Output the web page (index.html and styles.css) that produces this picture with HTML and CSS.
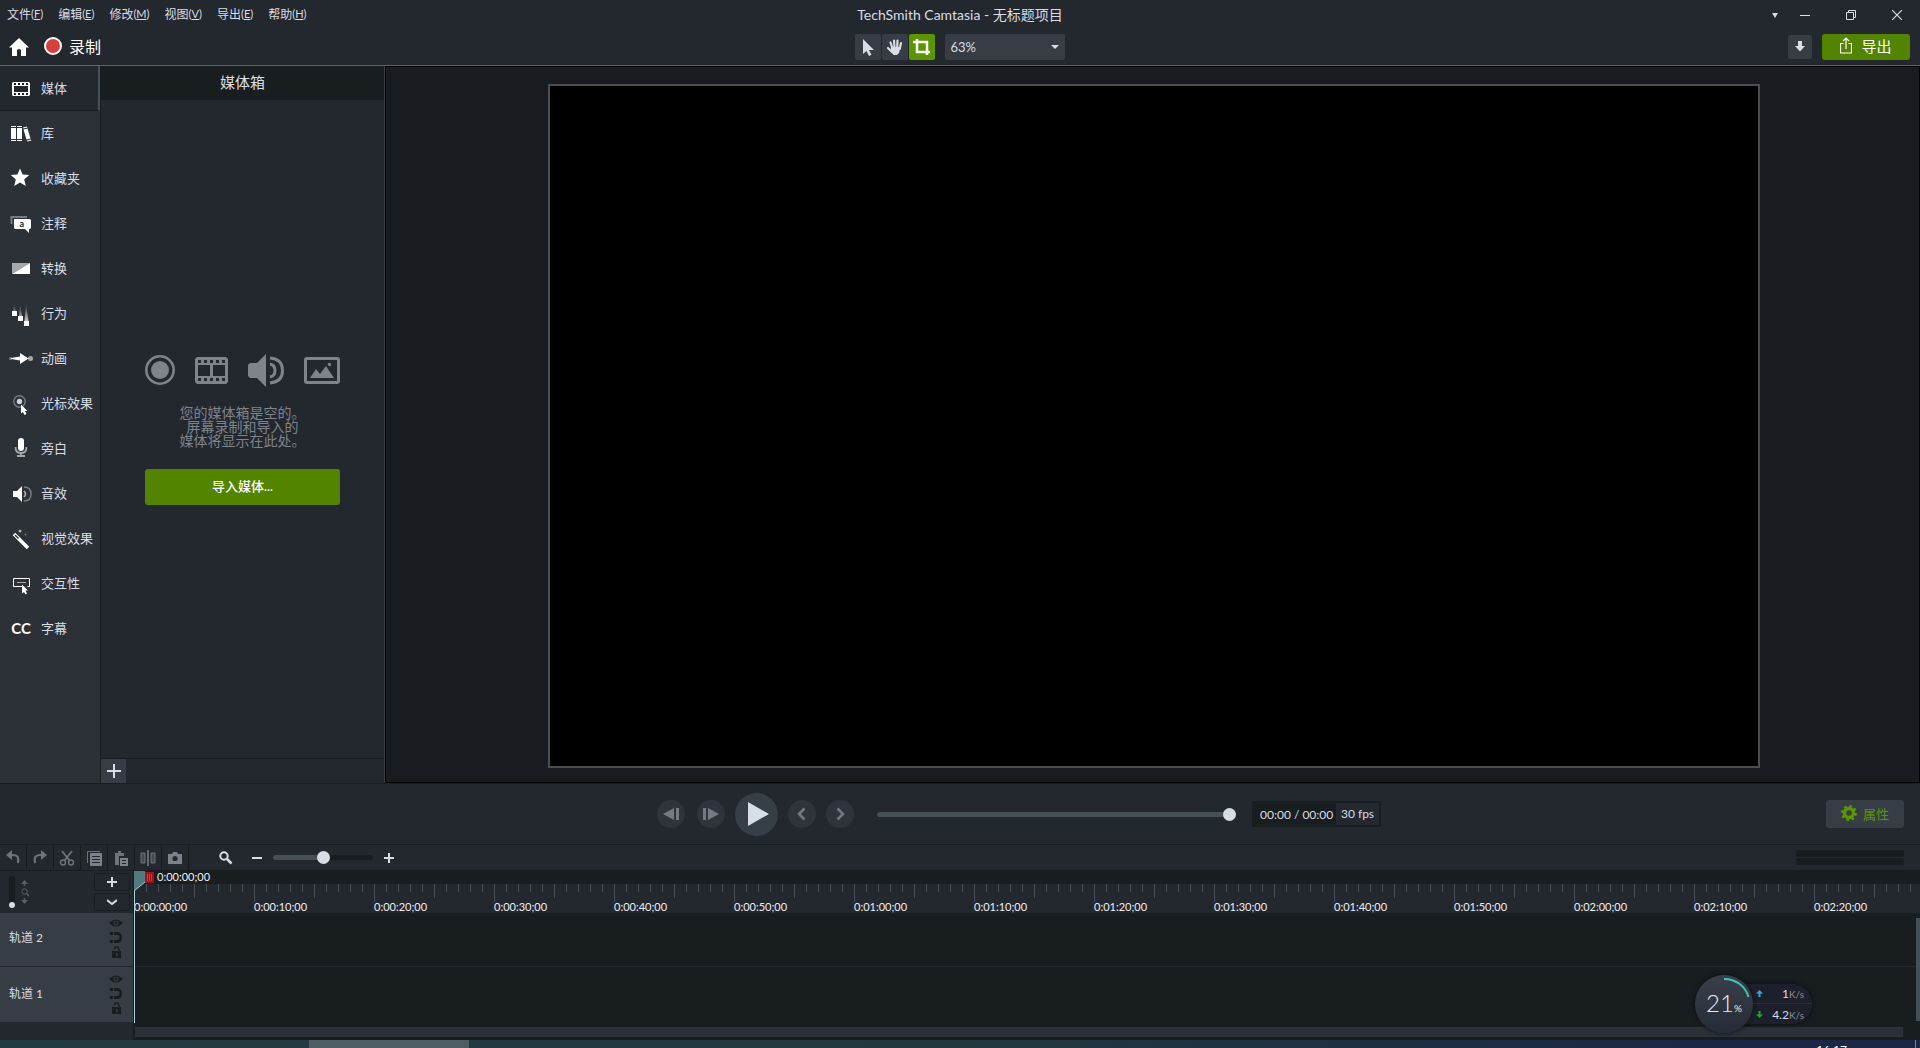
FILE: index.html
```
<!DOCTYPE html>
<html lang="zh-CN">
<head>
    <meta charset="UTF-8">
    <meta name="viewport" content="width=device-width, initial-scale=1.0">
    <title>TechSmith Camtasia - 无标题项目</title>
    <link rel="stylesheet" href="styles.css">
</head>
<body>
    <header class="header">
        <div class="titlebar">
            <nav class="menu">
                <button>文件<small>(<u>F</u>)</small></button>
                <button>编辑<small>(<u>E</u>)</small></button>
                <button>修改<small>(<u>M</u>)</small></button>
                <button>视图<small>(<u>V</u>)</small></button>
                <button>导出<small>(<u>E</u>)</small></button>
                <button>帮助<small>(<u>H</u>)</small></button>
            </nav>
            <h1 class="title">TechSmith Camtasia - 无标题项目</h1>
            <div class="window-controls">
                <button aria-label="更多"><svg width="6" height="6"><path d="M0 1h6L3 6z" fill="#d9dde6"/></svg></button>
                <button class="win" aria-label="最小化"><svg width="10" height="10"><path d="M0 5.500h10" stroke="#d9dde6"/></svg></button>
                <button class="win" aria-label="还原"><svg width="10" height="10"><path d="M.5 2.500h7v7h-7zM2.500 2.500v-2h7v7h-2" fill="none" stroke="#d9dde6"/></svg></button>
                <button class="win" aria-label="关闭"><svg width="10" height="10"><path d="M0 0l10 10M10 0L0 10" stroke="#d9dde6" stroke-width="1.200"/></svg></button>
            </div>
        </div>
        <div class="toolbar">
            <div class="toolbar-left">
                <button aria-label="主页"><svg width="20" height="18" viewBox="0 0 20 18"><path d="M10 0L0 9.500h3V18h5v-5.500q0-1.500 2-1.500t2 1.500V18h5V9.500h3z" fill="#fff"/></svg></button>
                <button class="record"><i class="record-dot"></i>录制</button>
            </div>
            <div class="tools">
                <button class="tool" aria-label="选择"><svg width="26" height="26"><path d="M8 5v15l3.500-3 2.500 5 2.500-1.300-2.500-4.700h5z" fill="#d9dde6"/></svg></button>
                <button class="tool" aria-label="平移"><svg width="26" height="26" fill="none" stroke="#d9dde6" stroke-linecap="round"><path d="M8.500 8.500l2 6M12 6.500l.5 7M15.500 6.500l-.3 7M19 9l-1.300 6M6 14l4 4" stroke-width="2.200"/><path d="M9 13h9.500l-1.500 6-2 2h-3.500l-3-4z" fill="#d9dde6" stroke="none"/></svg></button>
                <button class="tool tool-active" aria-label="裁剪"><svg width="26" height="26"><path d="M4 8h14v13M8 5v13h13" fill="none" stroke="#fff" stroke-width="2.500"/></svg></button>
                <div class="zoom-box">
                    <select class="zoom-select" aria-label="缩放"><option>63%</option><option>100%</option></select>
                </div>
            </div>
            <div class="toolbar-right">
                <button class="download" aria-label="下载"><svg width="10" height="11"><path d="M3 0h4v5h3l-5 5.500L0 5h3z" fill="#d9dde6"/></svg></button>
                <button class="export"><svg width="12" height="17" viewBox="0 0 12 17" fill="none" stroke="#fff" stroke-width="1.200"><path d="M3.500 6.500h-3v9.500h11V6.500h-3M6 12V1M3 4l3-3 3 3"/></svg>导出</button>
            </div>
        </div>
    </header>

    <main class="workspace">
        <nav class="sidebar">
            <button class="side-item side-active"><svg class="side-icon" viewBox="0 0 26 26"><path fill-rule="evenodd" d="M5 7h16l1 1v12l-1 1H5l-1-1V8zM6 11v6h14v-6zM6 8v2h2V8zm4 0v2h2V8zm4 0v2h2V8zm4 0v2h2V8zM6 18v2h2v-2zm4 0v2h2v-2zm4 0v2h2v-2zm4 0v2h2v-2z" fill="#fff"/></svg>媒体</button>
            <button class="side-item"><svg class="side-icon" viewBox="0 0 26 26" fill="#fff"><path d="M3 6h5v1H3zM3 8h5v11H3zM3 20h5v1H3zM9 6h5v1H9zM9 8h5v11H9zM9 20h5v1H9zM15 7.500l4-1 .3 1-4 1zM15.500 9.500l4-1 3 10-4 1zM19 20.500l4-1 .3 1-4 1z"/></svg>库</button>
            <button class="side-item"><svg class="side-icon" viewBox="0 0 26 26"><path d="M12 3.500l2.600 6 6.600.6-5 4.300 1.600 6.600-5.800-3.500L6.200 21l1.600-6.600-5-4.300 6.600-.6z" fill="#fff"/></svg>收藏夹</button>
            <button class="side-item"><svg class="side-icon" viewBox="0 0 26 26"><path d="M3.500 14V7h15.500" fill="none" stroke="#777c81" stroke-width="2"/><path d="M6 9h16l1 1v8l-1 1h-1v4l-4-4H7l-1-1z" fill="#fff"/><text x="11.500" y="17" class="icon-letter">a</text></svg>注释</button>
            <button class="side-item"><svg class="side-icon" viewBox="0 0 26 26"><path d="M4 19V8h18z" fill="#a5a8ac"/><path d="M4 19L22 8v11z" fill="#fff"/></svg>转换</button>
            <button class="side-item"><svg class="side-icon" viewBox="0 0 26 26"><defs><linearGradient id="trail" x1="0" y1="0" x2="0" y2="1"><stop offset="0" stop-color="#fff" stop-opacity="0"/><stop offset="1" stop-color="#fff" stop-opacity=".7"/></linearGradient></defs><path d="M6 4l2 7H5zM12 4l2 12h-3zM18 4l2.500 17h-4z" fill="url(#trail)"/><path d="M4 11h5v5H4zM10 16h5v5h-5zM16 21h5v5h-5z" fill="#fff"/></svg>行为</button>
            <button class="side-item"><svg class="side-icon" viewBox="0 0 26 26"><circle cx="2.500" cy="13.500" r="1.500" fill="#777c81"/><circle cx="22.500" cy="13.500" r="2.500" fill="#a5a8ac"/><path d="M3 13l9-1.500V8l8.500 5.500L12 19v-3.500L3 14z" fill="#fff"/></svg>动画</button>
            <button class="side-item"><svg class="side-icon" viewBox="0 0 26 26"><circle cx="11.500" cy="11.500" r="5.700" fill="none" stroke="#777c81" stroke-width="1.400"/><circle cx="11.500" cy="11.500" r="2.700" fill="#d0d2d5"/><path d="M13 14.500v9l2-1.500 1.500 3 2-1-1.500-3h2.500z" fill="#fff"/></svg>光标效果</button>
            <button class="side-item"><svg class="side-icon" viewBox="0 0 26 26"><rect x="10" y="3" width="6" height="13" rx="3" fill="#fff"/><path d="M7.700 12v2q.6 4 5.300 4t5.300-4v-2M13 18v3M9 21h8" fill="none" stroke="#a5a8ac" stroke-width="1.800"/></svg>旁白</button>
            <button class="side-item"><svg class="side-icon" viewBox="0 0 26 26"><path d="M5 11h4l5-5v16l-5-5H5z" fill="#fff"/><path d="M16 11q3 3 0 6" fill="none" stroke="#b5b8bb" stroke-width="1.500"/><path d="M16 7q7 0 7 7t-7 7" fill="none" stroke="#777c81" stroke-width="1.500"/></svg>音效</button>
            <button class="side-item"><svg class="side-icon" viewBox="0 0 26 26"><path d="M6 9l14 14" stroke="#fff" stroke-width="3.500"/><path d="M7 10l3.500 3.500" stroke="#2b3137" stroke-width="1.200"/><circle cx="12" cy="6" r="1.500" fill="#a5a8ac"/><circle cx="17.500" cy="9.500" r="1" fill="#777c81"/></svg>视觉效果</button>
            <button class="side-item"><svg class="side-icon" viewBox="0 0 26 26"><path d="M14 16.500H5.500v-8h16v8h-2" fill="none" stroke="#fff"/><path d="M9 12.500h9" stroke="#a5a8ac"/><path d="M14 14.500v9l2-1.500 1.500 2.500 1.500-1-1.500-3h2.500z" fill="#fff"/></svg>交互性</button>
            <button class="side-item"><span class="side-icon side-cc">CC</span>字幕</button>
        </nav>

        <section class="bin">
            <h2 class="bin-title">媒体箱</h2>
            <div class="bin-empty">
                <div class="bin-icons">
                    <svg width="30" height="30" viewBox="0 0 30 30"><circle cx="15" cy="15" r="13.700" fill="none" stroke="#7f838b" stroke-width="2.600"/><circle cx="15" cy="15" r="9" fill="#7f838b"/></svg>
                    <svg width="33" height="27" viewBox="0 0 33 27"><path fill-rule="evenodd" fill="#7f838b" d="M2 0h29l2 2v23l-2 2H2l-2-2V2zM3 8v11h12V8zM18 8v11h12V8zM3 3v3h3V3zm6 0v3h3V3zm6 0v3h3V3zm6 0v3h3V3zm6 0v3h3V3zM3 21v3h3v-3zm6 0v3h3v-3zm6 0v3h3v-3zm6 0v3h3v-3zm6 0v3h3v-3z"/></svg>
                    <svg width="36" height="33" viewBox="0 0 36 33"><path d="M2 9h7l9-9v33l-9-9H2l-2-2V11z" fill="#7f838b"/><path d="M22 10q5 1 5 6.500T22 23M22 4q12.500 1 12.500 12.500T22 29" fill="none" stroke="#7f838b" stroke-width="3"/></svg>
                    <svg width="36" height="27" viewBox="0 0 36 27"><rect x="1.500" y="1.500" width="33" height="24" rx="1.500" fill="none" stroke="#7f838b" stroke-width="3"/><path d="M6 21l6-9 4 5 6-8 8 12z" fill="#7f838b"/><circle cx="25.500" cy="7.500" r="1.700" fill="#7f838b"/></svg>
                </div>
                <p class="bin-text">您的媒体箱是空的。<br>屏幕录制和导入的<br>媒体将显示在此处。</p>
                <button class="import">导入媒体...</button>
            </div>
            <div class="bin-footer">
                <button class="bin-add" aria-label="添加"><svg width="14" height="14"><path d="M7 0v14M0 7h14" stroke="#d9dde6" stroke-width="2"/></svg></button>
            </div>
        </section>

        <section class="preview">
            <div class="canvas"></div>
        </section>
    </main>

    <section class="player">
        <div class="player-side"></div>
        <div class="player-center">
            <button class="round" aria-label="上一帧"><svg width="16" height="14"><path d="M11 1v12L0 7z" fill="#737a81"/><path d="M14.500 1v12" stroke="#737a81" stroke-width="3"/></svg></button>
            <button class="round" aria-label="下一帧"><svg width="16" height="14"><path d="M5 1v12l11-6z" fill="#737a81"/><path d="M1.500 1v12" stroke="#737a81" stroke-width="3"/></svg></button>
            <button class="round round-play" aria-label="播放"><svg width="22" height="24"><path d="M1 0v24l21-12z" fill="#d9dde6"/></svg></button>
            <button class="round" aria-label="后退"><svg width="10" height="14"><path d="M7.500 1.500L2 7l5.500 5.500" fill="none" stroke="#737a81" stroke-width="2.500"/></svg></button>
            <button class="round" aria-label="前进"><svg width="10" height="14"><path d="M2.500 1.500L8 7l-5.500 5.500" fill="none" stroke="#737a81" stroke-width="2.500"/></svg></button>
            <input class="seek" type="range" min="0" max="100" value="100" aria-label="播放进度">
            <div class="time-box">
                <span class="time">00:00 / 00:00</span>
                <span class="fps">30 fps</span>
            </div>
        </div>
        <div class="player-side player-right">
            <button class="props"><svg width="16" height="16" viewBox="0 0 16 16"><circle cx="8" cy="8" r="4.500" fill="none" stroke="#5b9500" stroke-width="3.500"/><circle cx="8" cy="8" r="6.800" fill="none" stroke="#5b9500" stroke-width="2.400" stroke-dasharray="2.670 2.670"/></svg>属性</button>
        </div>
    </section>

    <section class="edit-bar">
        <button class="edit" aria-label="撤消"><svg width="16" height="16"><path d="M7 0v10L1 5z" fill="#6d747b"/><path d="M6 5q9-1 7 8" fill="none" stroke="#6d747b" stroke-width="2"/></svg></button>
        <button class="edit" aria-label="重做"><svg width="16" height="16"><path d="M9 0v10l6-5z" fill="#6d747b"/><path d="M10 5q-9-1-7 8" fill="none" stroke="#6d747b" stroke-width="2"/></svg></button>
        <button class="edit" aria-label="剪切"><svg width="16" height="16" fill="none" stroke="#6d747b"><path d="M3 1l7.500 9.500M13 1L5.500 10.500" stroke-width="1.800"/><circle cx="4" cy="12.500" r="2.500" stroke-width="1.400"/><circle cx="12" cy="12.500" r="2.500" stroke-width="1.400"/></svg></button>
        <button class="edit" aria-label="复制"><svg width="16" height="16"><path d="M1.500 13V1.500H14" fill="none" stroke="#6d747b"/><rect x="4" y="3" width="12" height="13" rx="1" fill="#7c828a"/><path d="M6 6.500h8M6 9.500h8M6 12.500h8" stroke="#23272e" stroke-width="1.200"/></svg></button>
        <button class="edit" aria-label="粘贴"><svg width="16" height="16"><path d="M2 3h3V1h3v2h3v3H6v9H2z" fill="#6d747b"/><rect x="7" y="8" width="8" height="8" fill="#7c828a"/><path d="M9 10.500h4M9 13.500h4" stroke="#23272e"/></svg></button>
        <button class="edit" aria-label="拆分"><svg width="16" height="16"><path d="M8 0v16" stroke="#7c828a" stroke-width="1.500"/><path d="M1 3h4v10H1zM11 3h4v10h-4z" fill="#444b52" stroke="#6d747b"/></svg></button>
        <button class="edit" aria-label="截图"><svg width="16" height="16"><path d="M1 4h4l1-2h4l1 2h4v10H1z" fill="#7c828a"/><circle cx="8" cy="8.500" r="2.600" fill="#23272e"/></svg></button>
        <div class="zoom-bar">
            <svg class="magnifier" width="14" height="14"><circle cx="5" cy="5" r="3.700" fill="none" stroke="#d9dde6" stroke-width="2"/><path d="M8 8l4.500 4.500" stroke="#d9dde6" stroke-width="2.500"/></svg>
            <button aria-label="缩小"><svg width="10" height="10"><path d="M0 5h10" stroke="#d9dde6" stroke-width="2"/></svg></button>
            <input class="zoom-range" type="range" min="0" max="100" value="50" aria-label="时间轴缩放">
            <button aria-label="放大"><svg width="10" height="10"><path d="M0 5h10M5 0v10" stroke="#d9dde6" stroke-width="2"/></svg></button>
        </div>
        <div class="meters"><i></i><i></i></div>
    </section>

    <section class="timeline">
        <div class="heads">
            <div class="heads-top">
                <input class="height-range" type="range" min="0" max="100" value="0" aria-label="轨道高度">
                <svg width="8" height="24" viewBox="0 0 8 24" fill="none" stroke="#555e64"><path d="M3.500 1v5M3.500 18v5" stroke-width="1.500"/><path d="M0 4l3.500-4L7 4zM0 20l3.500 4L7 20z" fill="#555e64" stroke="none"/><circle cx="3.500" cy="11.500" r="2.700"/><path d="M5.500 13.500L8 16" stroke-width="1.500"/></svg>
                <div class="head-buttons">
                    <button class="head-button" aria-label="添加轨道"><svg width="10" height="10"><path d="M0 5h10M5 0v10" stroke="#d9dde6" stroke-width="2"/></svg></button>
                    <button class="head-button" aria-label="折叠"><svg width="10" height="7"><path d="M0 1l5 4 5-4" fill="none" stroke="#d9dde6" stroke-width="2"/></svg></button>
                </div>
            </div>
            <div class="track-list">
                <div class="head">
                    <span>轨道 2</span>
                    <svg class="head-icons" width="14" height="42" viewBox="0 0 14 42"><use href="#headIcons"/></svg>
                </div>
                <div class="head">
                    <span>轨道 1</span>
                    <svg class="head-icons" width="14" height="42" viewBox="0 0 14 42">
                        <g id="headIcons" fill="#181d20"><path fill-rule="evenodd" d="M0 4q7-7 14 0-7 7-14 0zM7 1.500a2.500 2.500 0 1 0 0 5 2.500 2.500 0 0 0 0-5z"/><circle cx="7" cy="4" r="1.500"/><path d="M1 13h3v3H1zM5 13h3q5 0 5 5.500T8 24H5v-3h3q2.500 0 2.500-2.500T8 16H5zM1 21h3v3H1z"/><path fill-rule="evenodd" d="M3 32h9v7H3zM7 34v3h1.500v-3z"/><path d="M5.500 30q0-2 2-2t2.500 2v2" fill="none" stroke="#181d20" stroke-width="1.300"/></g>
                    </svg>
                </div>
            </div>
        </div>

        <div class="lanes">
            <div class="playhead-row"><span class="playhead-time">0:00:00;00</span></div>
            <div class="ruler">
                <span>0:00:00;00</span><span>0:00:10;00</span><span>0:00:20;00</span><span>0:00:30;00</span><span>0:00:40;00</span>
                <span>0:00:50;00</span><span>0:01:00;00</span><span>0:01:10;00</span><span>0:01:20;00</span><span>0:01:30;00</span>
                <span>0:01:40;00</span><span>0:01:50;00</span><span>0:02:00;00</span><span>0:02:10;00</span><span>0:02:20;00</span>
            </div>
            <div class="track-list">
                <div class="lane"></div>
                <div class="lane"></div>
            </div>
            <div class="scroll-x"></div>
            <div class="scroll-y"></div>
            <div class="playhead">
                <svg width="20" height="20"><path d="M0 0h11v11L0 20z" fill="#4f7b80"/><path d="M11 11L0 20" stroke="#a5d0d4"/><path d="M11 1h9v11h-9z" fill="#a51318"/><path d="M13.500 3v7M15.500 3v7M17.500 3v7" stroke="#d84c50" stroke-width=".7"/></svg>
            </div>
        </div>
    </section>

    <footer class="taskbar">
        <div class="task"></div>
        <span class="clock">16:17</span>
        <i class="show-desktop"></i>
    </footer>

    <aside class="monitor">
        <div class="gauge">
            <svg class="gauge-arc" width="58" height="58"><path d="M29 4a25 25 0 0 1 24.500 18" fill="none" stroke="#3cc9b4" stroke-width="1.800"/></svg>
            <span class="gauge-value">21</span><span class="gauge-unit">%</span>
        </div>
        <div class="net">
            <div class="net-row"><svg width="7" height="7"><path d="M3.500 0L7 3.500H4.500V7h-2V3.500H0z" fill="#37a5e5"/></svg><span>1<small>K/s</small></span></div>
            <div class="net-row"><svg width="7" height="7"><path d="M3.500 7L7 3.500H4.500V0h-2v3.500H0z" fill="#1fa52f"/></svg><span>4.2<small>K/s</small></span></div>
        </div>
    </aside>
</body>
</html>
```

FILE: styles.css
```
* {
    box-sizing: border-box;
}

body {
    margin: 0;
    height: 100vh;
    display: flex;
    flex-direction: column;
    overflow: hidden;
    background-color: #23272e;
    color: #d9dde6;
    font-family: Lato, 'Noto Sans CJK SC', sans-serif;
    font-size: 13px;
    position: relative;
}

button {
    display: flex;
    align-items: center;
    justify-content: center;
    padding: 0;
    border: none;
    background: none;
    color: inherit;
    font: inherit;
    cursor: pointer;
}

svg {
    display: block;
    flex-shrink: 0;
}

h1, h2, p {
    margin: 0;
    font-weight: normal;
}

/* header */
.header {
    height: 66px;
    border-bottom: 1px solid #4d7a07;
}

.titlebar,
.toolbar {
    display: grid;
    grid-template-columns: 1fr auto 1fr;
    align-items: center;
}

.titlebar {
    height: 27px;
    padding-bottom: 3px;
}

.toolbar {
    height: 38px;
    padding: 1px 10px 0 9px;
}

.menu {
    display: flex;
    gap: 15px;
    padding-left: 7px;
    font-size: 12px;
}

.menu small {
    font-size: 11px;
}

.title {
    font-size: 14px;
}

.window-controls {
    display: flex;
    justify-content: flex-end;
    padding-top: 3px;
}

.window-controls button {
    height: 24px;
}

.window-controls .win {
    width: 46px;
}

.window-controls .win:nth-child(2) {
    margin-left: 4px;
}

.toolbar-left {
    display: flex;
    align-items: center;
    gap: 15px;
}

.record {
    gap: 7px;
    padding-bottom: 2px;
    font-size: 16px;
    color: #fff;
}

.record-dot {
    width: 18px;
    height: 18px;
    border: 2px solid #fff;
    border-radius: 50%;
    background-color: #d84040;
}

.tools {
    display: flex;
    gap: 1px;
}

.tool {
    width: 26px;
    height: 26px;
    background-color: #363d45;
    border-radius: 2px;
}

.tool-active {
    background-color: #5b9500;
}

.zoom-box {
    position: relative;
    margin-left: 9px;
}

.zoom-box::after {
    content: '';
    position: absolute;
    right: 6px;
    top: 11px;
    border: 4px solid transparent;
    border-top-color: #d9dde6;
    border-bottom: none;
    pointer-events: none;
}

.zoom-select {
    appearance: none;
    width: 120px;
    height: 26px;
    padding: 0 6px;
    border: none;
    border-radius: 2px;
    background-color: #363d45;
    color: #d9dde6;
    font: inherit;
}

.toolbar-right {
    display: flex;
    align-items: center;
    justify-content: flex-end;
    gap: 10px;
}

.download {
    width: 24px;
    height: 24px;
    border-radius: 2px;
    background-color: #363d45;
}

.export {
    width: 88px;
    height: 26px;
    gap: 9px;
    padding-bottom: 2px;
    border-radius: 3px;
    background-color: #528400;
    color: #fff;
    font-size: 15px;
}

/* workspace */
.workspace {
    flex: 1;
    display: flex;
    min-height: 0;
}

.sidebar {
    width: 101px;
    background-color: #2b3137;
    border-right: 1px solid #181d20;
}

.side-item {
    width: 100%;
    height: 45px;
    justify-content: flex-start;
    gap: 7px;
    padding: 0 0 2px 8px;
    white-space: nowrap;
}

.side-active {
    padding-bottom: 1px;
    background-color: #23272e;
    border-right: 2px solid #454f56;
    border-bottom: 1px solid #181d20;
}

.side-icon {
    width: 26px;
    height: 26px;
}

.side-cc {
    color: #fff;
    font-size: 15px;
    font-weight: bold;
    line-height: 26px;
}

.icon-letter {
    font-size: 9px;
    font-weight: bold;
    fill: #23272e;
}

.bin {
    width: 284px;
    display: flex;
    flex-direction: column;
    border-right: 1px solid #363d45;
}

.bin-title {
    height: 34px;
    line-height: 32px;
    text-align: center;
    font-size: 15px;
    background-color: #181d1f;
}

.bin-empty {
    flex: 1;
    display: flex;
    flex-direction: column;
    align-items: center;
    justify-content: center;
    gap: 19px;
}

.bin-icons {
    display: flex;
    align-items: center;
    gap: 20px;
}

.bin-text {
    padding-bottom: 2px;
    font-size: 14px;
    line-height: 14px;
    text-align: center;
    color: #7f838b;
}

.import {
    width: 195px;
    height: 36px;
    padding-bottom: 2px;
    border-radius: 3px;
    background-color: #528400;
    color: #fff;
    font-weight: 500;
}

.bin-footer {
    border-top: 1px solid #181d20;
}

.bin-add {
    width: 25px;
    height: 24px;
    background-color: #363d45;
}

.preview {
    flex: 1;
    min-width: 0;
    display: flex;
    justify-content: center;
    padding: 17px 0 14px 3px;
    background-color: #181b20;
    border: 1px solid #000;
}

.canvas {
    box-sizing: content-box;
    height: calc(100% - 4px);
    aspect-ratio: 16 / 9;
    background-color: #000;
    border: 2px solid #4d4d4d;
}

/* player */
.player {
    height: 62px;
    display: flex;
    align-items: center;
    padding: 0 16px 0 134px;
    border-top: 1px solid #181d20;
    border-bottom: 1px solid #181d20;
}

.player-side {
    flex: 1;
}

.player-right {
    display: flex;
    justify-content: flex-end;
}

.player-center {
    display: flex;
    align-items: center;
    gap: 10px;
}

.round {
    width: 28px;
    height: 28px;
    border-radius: 50%;
    background-color: #2e343b;
}

.round:first-child {
    margin-right: 2px;
}

.round-play {
    width: 43px;
    height: 43px;
    padding-left: 2px;
    background-color: #363f46;
}

input[type="range"] {
    appearance: none;
    margin: 0;
    background: none;
}

.player .seek {
    width: 359px;
    height: 14px;
    margin: 0 6px 0 13px;
}

.seek::-webkit-slider-runnable-track {
    height: 5px;
    border-radius: 3px;
    background-color: #454f56;
}

.seek::-webkit-slider-thumb {
    appearance: none;
    width: 13px;
    height: 13px;
    margin-top: -4px;
    border-radius: 50%;
    background-color: #d9dde6;
}

.time-box {
    display: flex;
    align-items: center;
    justify-content: space-between;
    width: 129px;
    height: 26px;
    padding: 0 2px 0 8px;
    border-radius: 2px;
    background-color: #181d1f;
    font-size: 12px;
    white-space: nowrap;
}

.fps {
    width: 43px;
    line-height: 22px;
    text-align: center;
    background-color: #23272e;
}

.props {
    width: 78px;
    height: 28px;
    gap: 6px;
    padding-bottom: 2px;
    border-radius: 3px;
    background-color: #363d45;
    color: #5b9500;
}

/* edit bar */
.edit-bar {
    height: 26px;
    display: flex;
    align-items: center;
    padding-right: 16px;
    border-bottom: 1px solid #181d20;
}

.edit {
    width: 27px;
    height: 25px;
    border-right: 1px solid #181d20;
}

.zoom-bar {
    display: flex;
    align-items: center;
    gap: 11px;
    padding-left: 30px;
}

.magnifier {
    margin-right: 8px;
}

.zoom-range {
    width: 100px;
    height: 14px;
}

.zoom-range::-webkit-slider-runnable-track {
    height: 5px;
    border-radius: 3px;
    background: linear-gradient(to right, #454f56 50%, #181d1f 50%);
}

.zoom-range::-webkit-slider-thumb {
    appearance: none;
    width: 13px;
    height: 13px;
    margin-top: -4px;
    border-radius: 50%;
    background-color: #d9dde6;
}

.meters {
    display: flex;
    flex-direction: column;
    gap: 1px;
    width: 108px;
    margin-left: auto;
}

.meters i {
    height: 7px;
    border-radius: 2px;
    background-color: #181d1f;
}

/* timeline */
.timeline {
    height: 169px;
    display: flex;
}

.heads {
    width: 134px;
    border-right: 1px solid #181d20;
}

.heads-top {
    height: 42px;
    display: flex;
    align-items: center;
    gap: 6px;
    padding: 0 3px 0 9px;
}

.height-range {
    width: 6px;
    height: 32px;
    writing-mode: vertical-lr;
    direction: rtl;
}

.height-range::-webkit-slider-runnable-track {
    width: 6px;
    border-radius: 3px;
    background-color: #181d1f;
}

.height-range::-webkit-slider-thumb {
    appearance: none;
    width: 6px;
    height: 6px;
    border-radius: 50%;
    background-color: #d9dde6;
}

.head-buttons {
    display: flex;
    flex-direction: column;
    gap: 2px;
    margin-left: auto;
}

.head-button {
    width: 36px;
    height: 18px;
    border: 1px solid #181d20;
    border-radius: 2px;
}

.track-list {
    height: 110px;
    display: flex;
    flex-direction: column;
    justify-content: flex-end;
    overflow: hidden;
}

.head {
    flex: 0 0 56px;
    display: flex;
    align-items: center;
    justify-content: space-between;
    padding: 0 10px 5px 9px;
    font-size: 12px;
    background-color: #363d45;
    border-bottom: 1px solid #23272e;
}

.head-icons {
    align-self: flex-end;
}

.lanes {
    flex: 1;
    min-width: 0;
    position: relative;
    background-color: #181d1f;
}

.playhead-row {
    height: 13px;
    padding-left: 23px;
    line-height: 12px;
    font-size: 11px;
    color: #eef0f4;
}

.ruler {
    height: 29px;
    display: flex;
    align-items: flex-end;
    overflow: hidden;
    font-size: 11px;
    line-height: 13px;
    color: #eef0f4;
    background-color: #23272e;
    background-image:
        linear-gradient(to right, #454f56 1px, transparent 1px),
        linear-gradient(to right, #454f56 1px, transparent 1px),
        linear-gradient(to right, #454f56 1px, transparent 1px);
    background-size: 120px 18px, 60px 14px, 12px 8px;
    background-repeat: repeat-x;
}

.ruler span {
    flex: 0 0 120px;
}

.lane {
    flex: 0 0 56px;
    border-bottom: 1px solid #23272e;
}

.lane:last-child {
    border-bottom: none;
}

.scroll-x {
    height: 10px;
    margin: 4px 17px 0 1px;
    background-color: #2b3137;
}

.scroll-y {
    position: absolute;
    right: 0;
    top: 47px;
    width: 4px;
    height: 103px;
    background-color: #454f56;
}

.playhead {
    position: absolute;
    left: 0;
    top: 0;
    height: 152px;
    border-left: 1px solid #a5d0d4;
}

.playhead svg {
    margin-left: -1px;
}

/* taskbar */
.taskbar {
    height: 8px;
    display: flex;
    overflow: hidden;
    background: linear-gradient(to right, #213c42, #21383f 50%, #1b2745 88%);
}

.task {
    width: 160px;
    margin-left: 309px;
    background-color: #4c5e64;
}

.clock {
    margin-left: auto;
    padding: 2px 68px 0 0;
    font-size: 12px;
    color: #fff;
}

.show-desktop {
    width: 5px;
    border-left: 1px solid #7c828f;
}

/* floating monitor */
.monitor {
    position: absolute;
    right: 108px;
    bottom: 15px;
    display: flex;
    align-items: center;
}

.gauge {
    position: relative;
    z-index: 1;
    width: 58px;
    height: 58px;
    display: flex;
    align-items: baseline;
    justify-content: center;
    border-radius: 50%;
    background: linear-gradient(#3a3f4c, #262b38);
    box-shadow: 0 0 4px #0c0e12;
    color: #e8eaee;
    line-height: 56px;
}

.gauge-arc {
    position: absolute;
    left: 0;
    top: 0;
}

.gauge-value {
    font-size: 24px;
    font-weight: 300;
}

.gauge-unit {
    font-size: 10px;
}

.net {
    width: 70px;
    height: 40px;
    margin-left: -11px;
    border-radius: 0 20px 20px 0;
    background-color: #1d202b;
    box-shadow: 0 0 4px #0c0e12;
}

.net-row {
    display: flex;
    align-items: center;
    justify-content: space-between;
    height: 20px;
    padding: 0 8px 0 14px;
    font-size: 12px;
}

.net-row:first-child {
    border-bottom: 1px solid #2b2f3b;
}

.net-row small {
    font-size: 10px;
    color: #8a8f99;
}
```
